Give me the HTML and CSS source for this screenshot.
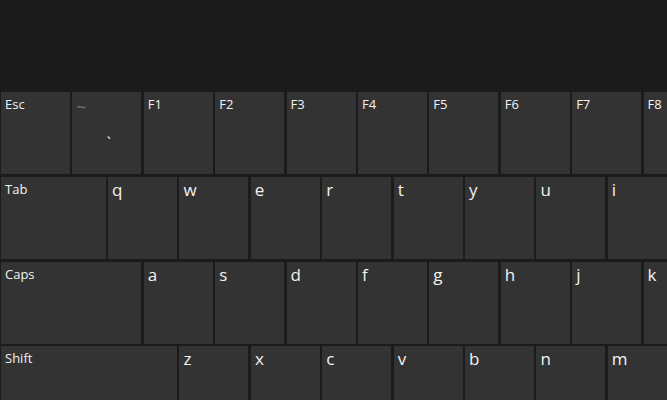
FILE: index.html
```html
<!DOCTYPE html>
<html lang="en">

<head>
    <meta charset="UTF-8">
    <meta name="viewport" content="width=device-width, initial-scale=1.0">
    <title>Touch Keyboard</title>

    <link rel="stylesheet" href="styles.css">
</head>

<body>
    <main class="keyboard">
        <div class="candidates"></div>

        <div class="row">
            <div class="key mod">Esc</div>
            <div class="key dual">
                <span class="shifted">~</span>
                <span class="primary">`</span>
            </div>
            <div class="key mod">F1</div>
            <div class="key mod">F2</div>
            <div class="key mod">F3</div>
            <div class="key mod">F4</div>
            <div class="key mod">F5</div>
            <div class="key mod">F6</div>
            <div class="key mod">F7</div>
            <div class="key mod">F8</div>
        </div>

        <div class="row">
            <div class="key mod w15">Tab</div>
            <div class="key">q</div>
            <div class="key">w</div>
            <div class="key">e</div>
            <div class="key">r</div>
            <div class="key">t</div>
            <div class="key">y</div>
            <div class="key">u</div>
            <div class="key">i</div>
        </div>

        <div class="row">
            <div class="key mod w2">Caps</div>
            <div class="key">a</div>
            <div class="key">s</div>
            <div class="key">d</div>
            <div class="key">f</div>
            <div class="key">g</div>
            <div class="key">h</div>
            <div class="key">j</div>
            <div class="key">k</div>
        </div>

        <div class="row">
            <div class="key mod w25">Shift</div>
            <div class="key">z</div>
            <div class="key">x</div>
            <div class="key">c</div>
            <div class="key">v</div>
            <div class="key">b</div>
            <div class="key">n</div>
            <div class="key">m</div>
        </div>
    </main>
</body>

</html>
```

FILE: styles.css
```css
:root {
    --unit: 71.4px;
    --gap: 2.4px;
    --key: #333333;
    --bg: #1b1b1b;
}

html,
body {
    margin: 0;
    background: var(--bg);
}

.keyboard {
    width: 667px;
    height: 400px;
    overflow: hidden;
    display: flex;
    flex-direction: column;
    gap: 2.3px;
    font-family: "Open Sans", "Noto Sans", sans-serif;
    color: #f2f2f2;
}

.candidates {
    flex: 0 0 89.7px;
}

.row {
    display: flex;
    gap: var(--gap);
    padding-left: 1px;
}

.key {
    flex: 0 0 calc(var(--unit) - var(--gap));
    height: 82.5px;
    box-sizing: border-box;
    padding: 1px 0 0 4px;
    background: var(--key);
    font-size: 17px;
    line-height: 24px;
}

.key.mod {
    font-size: 13px;
    line-height: 20px;
    padding-top: 2px;
}

.w15 {
    flex-basis: calc(var(--unit) * 1.5 - var(--gap));
}

.w2 {
    flex-basis: calc(var(--unit) * 2 - var(--gap));
}

.w25 {
    flex-basis: calc(var(--unit) * 2.5 - var(--gap));
}

.dual {
    display: flex;
    flex-direction: column;
}

.shifted {
    color: #7a7a7a;
    font-size: 17px;
    line-height: 24px;
    margin-top: 2px;
}

.primary {
    align-self: center;
    margin-top: 11px;
    font-size: 15px;
}
```
